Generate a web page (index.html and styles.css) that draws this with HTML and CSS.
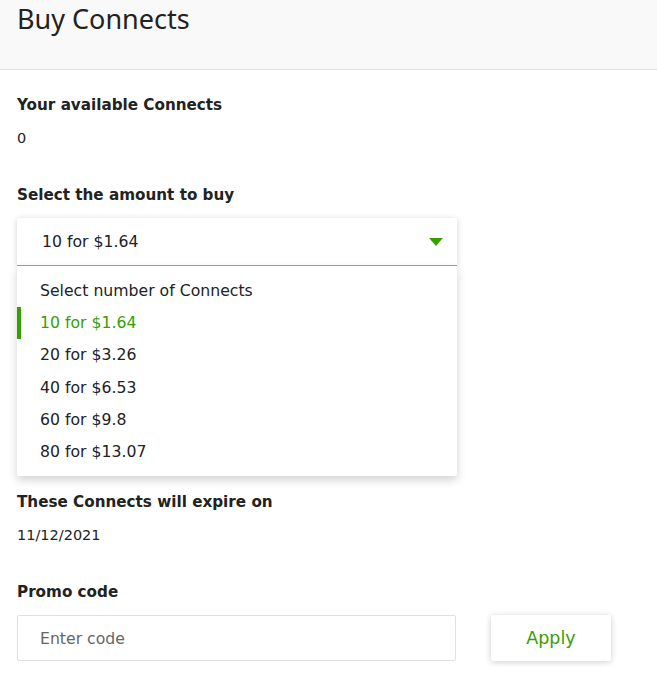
FILE: index.html
```html
<!DOCTYPE html>
<html>
<head>
<meta charset="utf-8">
<link rel="stylesheet" href="styles.css">
</head>
<body>
<div class="page">
  <header class="head">
    <h1 class="title">Buy Connects</h1>
  </header>
  <main class="content">
    <section class="field">
      <div class="label">Your available Connects</div>
      <div class="value">0</div>
    </section>
    <section class="field select-field">
      <div class="label">Select the amount to buy</div>
      <div class="dropdown">
        <div class="dd-toggle">
          <span>10 for $1.64</span>
          <svg class="caret" width="14" height="8" viewBox="0 0 14 8"><path d="M0 0H14L7 8Z" fill="#37a000"/></svg>
        </div>
        <ul class="dd-menu">
          <li class="dd-item">Select number of Connects</li>
          <li class="dd-item active">10 for $1.64</li>
          <li class="dd-item">20 for $3.26</li>
          <li class="dd-item">40 for $6.53</li>
          <li class="dd-item">60 for $9.8</li>
          <li class="dd-item">80 for $13.07</li>
        </ul>
      </div>
    </section>
    <section class="field after-menu">
      <div class="label">These Connects will expire on</div>
      <div class="value">11/12/2021</div>
    </section>
    <section class="field">
      <div class="label">Promo code</div>
      <div class="promo">
        <input class="input" type="text" placeholder="Enter code">
        <button class="btn">Apply</button>
      </div>
    </section>
  </main>
</div>
</body>
</html>
```
FILE: styles.css
```css
* { box-sizing: border-box; }
html, body { margin: 0; padding: 0; background: #fff; }
body {
  font-family: "DejaVu Sans", "Liberation Sans", sans-serif;
  color: #222;
  overflow: hidden;
}
.head {
  background: #f9f9f9;
  border-bottom: 1px solid #e0e0e0;
  height: 70px;
  padding: 0 17px;
}
.title {
  margin: 0;
  font-family: "Noto Sans", "Open Sans", sans-serif;
  font-weight: 400;
  font-size: 27px;
  line-height: 38px;
  color: #222;
}
.content { padding: 0 17px 30px; }
.field { margin-top: 37px; }
.field:first-child { margin-top: 25px; }
.field.after-menu { margin-top: 226px; }
.label {
  font-weight: 700;
  font-size: 15.2px;
  line-height: 20px;
}
.value {
  font-size: 14.5px;
  line-height: 20px;
  margin-top: 13px;
}
.select-field { position: relative; }
.dropdown {
  position: relative;
  width: 440px;
  margin-top: 13px;
}
.dd-toggle {
  height: 48px;
  background: #fff;
  border-bottom: 1px solid #9aa0a0;
  box-shadow: 0 1px 6px rgba(0,0,0,0.18);
  border-radius: 2px 2px 0 0;
  display: flex;
  align-items: center;
  justify-content: space-between;
  padding: 0 14px 0 25px;
  font-size: 15.7px;
}
.dd-menu {
  position: absolute;
  left: 0;
  right: 0;
  top: 48px;
  margin: 0;
  padding: 9px 0 8px;
  list-style: none;
  background: #fff;
  box-shadow: 0 4px 10px rgba(0,0,0,0.18);
  border-radius: 0 0 2px 2px;
  z-index: 2;
}
.dd-item {
  height: 32.2px;
  line-height: 32px;
  padding-left: 23px;
  font-size: 15.7px;
  color: #222;
}
.dd-item.active {
  color: #37a000;
  box-shadow: inset 4px 0 0 #37a000;
}
.promo {
  display: flex;
  align-items: center;
  gap: 35px;
  margin-top: 13px;
}
.input {
  width: 439px;
  height: 46px;
  border: 1px solid #e0e0e0;
  border-radius: 2px;
  padding: 0 22px;
  font-family: inherit;
  font-size: 15.7px;
  color: #222;
  outline: none;
}
.input::placeholder { color: #666; }
.btn {
  width: 120px;
  height: 46px;
  border: none;
  background: #fff;
  border-radius: 2px;
  box-shadow: 0 1px 6px rgba(0,0,0,0.2);
  font-family: inherit;
  font-size: 17.5px;
  color: #37a000;
}
```
